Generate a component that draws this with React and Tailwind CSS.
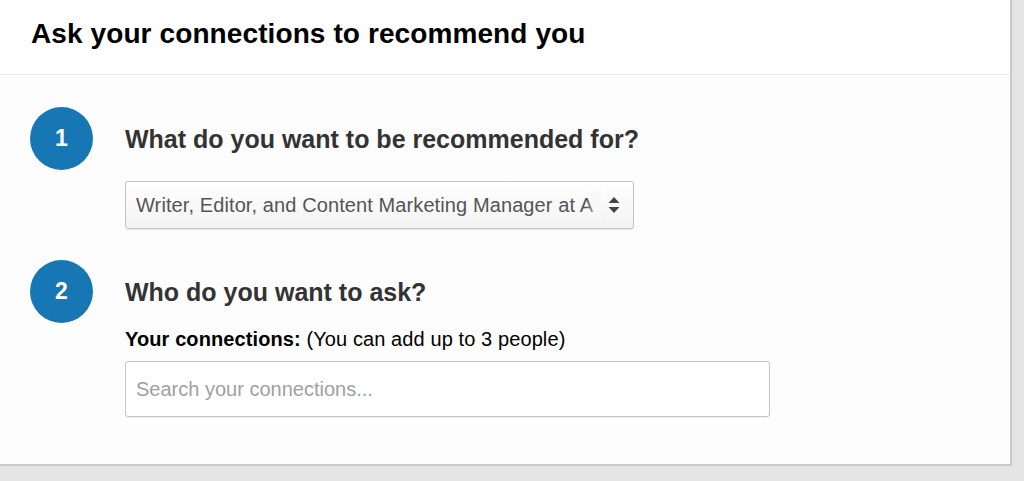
export default function App() {
  return (
    <div
      className="w-[1024px] h-[481px] bg-[#e4e4e4] overflow-hidden"
      style={{ fontFamily: '"Liberation Sans", Arial, sans-serif' }}
    >
      <div className="w-[1012px] h-[466px] bg-white border-r-2 border-b-2 border-[#c9c9c9] flex flex-col">
        <div className="h-[75px] border-b border-[#e9e9e9] flex items-center pl-[31px] pb-[6px]">
          <h1 className="text-[28px] leading-[32px] font-bold text-black tracking-[0.1px]">
            Ask your connections to recommend you
          </h1>
        </div>

        <div className="flex-1 bg-[#fdfdfd] pl-[30px] pt-[32px]">
          <div className="flex items-center gap-[32px]">
            <div className="w-[63px] h-[63px] rounded-full bg-[#1776b4] flex items-center justify-center text-white text-[23px] font-bold">
              1
            </div>
            <h2 className="text-[25px] leading-[30px] font-bold text-[#333]">What do you want to be recommended for?</h2>
          </div>

          <div className="ml-[95px] mt-[11px] w-[509px] h-[48px] border border-[#c4c4c4] rounded-[3px] bg-gradient-to-b from-white to-[#f3f3f3] flex items-center shadow-[0_1px_1px_rgba(0,0,0,0.08)]">
            <span className="relative flex-1 pl-[10px] text-[20px] text-[#555] whitespace-nowrap overflow-hidden tracking-[0.1px]">
              Writer, Editor, and Content Marketing Manager at A
              <span className="absolute right-0 top-0 h-full w-[14px] bg-gradient-to-r from-transparent to-[#f8f8f8]" />
            </span>
            <svg className="w-[14px] h-[18px] mr-[12px] ml-[6px] shrink-0" viewBox="0 0 14 18" fill="#444">
              <path d="M7 1 L12.5 7 H1.5 Z" />
              <path d="M7 17 L12.5 11 H1.5 Z" />
            </svg>
          </div>

          <div className="flex items-center gap-[32px] mt-[31px]">
            <div className="w-[63px] h-[63px] rounded-full bg-[#1776b4] flex items-center justify-center text-white text-[23px] font-bold">
              2
            </div>
            <h2 className="text-[25px] leading-[30px] font-bold text-[#333]">Who do you want to ask?</h2>
          </div>

          <div className="ml-[95px] mt-[4px] text-[20px] leading-[24px] text-black tracking-[0.1px]">
            <span className="font-bold">Your connections:</span> (You can add up to 3 people)
          </div>

          <div className="ml-[95px] mt-[10px] w-[645px] h-[56px] border border-[#c4c4c4] rounded-[3px] bg-white flex items-center pl-[10px] shadow-[0_1px_1px_rgba(0,0,0,0.06)]">
            <span className="text-[20px] text-[#a0a0a0]">Search your connections...</span>
          </div>
        </div>
      </div>
    </div>
  );
}
